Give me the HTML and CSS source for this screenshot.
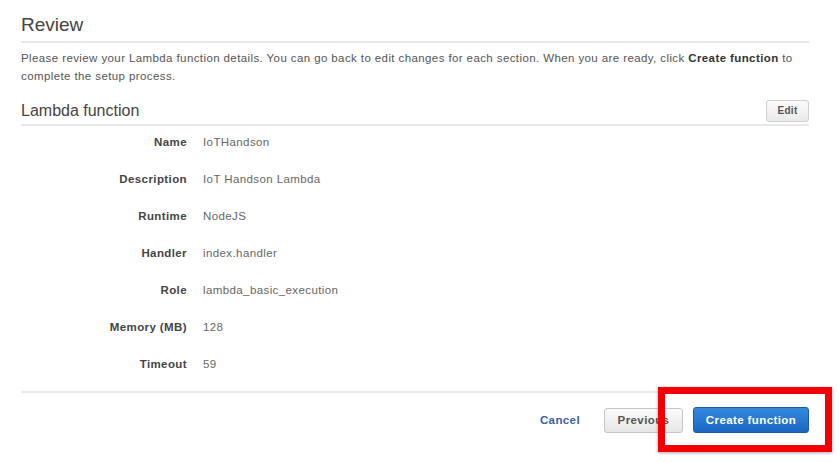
FILE: index.html
```html
<!DOCTYPE html>
<html>
<head>
<meta charset="utf-8">
<link rel="stylesheet" href="styles.css">
</head>
<body>
<div class="page">
  <h1 class="title">Review</h1>
  <p class="intro">Please review your Lambda function details. You can go back to edit changes for each section. When you are ready, click <b>Create function</b> to complete the setup process.</p>
  <div class="section-head">
    <h2 class="section-title">Lambda function</h2>
    <button class="btn-edit">Edit</button>
  </div>
  <dl class="details">
    <dt>Name</dt><dd>IoTHandson</dd>
    <dt>Description</dt><dd>IoT Handson Lambda</dd>
    <dt>Runtime</dt><dd>NodeJS</dd>
    <dt>Handler</dt><dd>index.handler</dd>
    <dt>Role</dt><dd>lambda_basic_execution</dd>
    <dt>Memory (MB)</dt><dd>128</dd>
    <dt>Timeout</dt><dd>59</dd>
  </dl>
  <div class="footer">
    <a class="cancel">Cancel</a>
    <button class="btn-prev">Previous</button>
    <button class="btn-create">Create function</button>
    <div class="highlight"></div>
  </div>
</div>
</body>
</html>
```
FILE: styles.css
```css
html, body {
  margin: 0;
  padding: 0;
  background: #ffffff;
}
body {
  font-family: "Liberation Sans", Arial, sans-serif;
  color: #555;
  min-height: 462px;
}
.page {
  padding: 0 31px 29px 21px;
}
.title {
  margin: 0;
  padding: 14px 0 5px;
  font-size: 19px;
  line-height: 22px;
  font-weight: normal;
  color: #444;
  border-bottom: 2px solid #e8e8e8;
}
.intro {
  margin: 6px 0 0;
  font-size: 11.5px;
  letter-spacing: 0.4px;
  line-height: 18px;
  color: #555;
}
.intro b {
  color: #333;
}
.section-head {
  margin-top: 12px;
  height: 27px;
  display: flex;
  align-items: center;
  justify-content: space-between;
  border-bottom: 2px solid #e8e8e8;
}
.section-title {
  margin: 0;
  font-size: 16px;
  font-weight: normal;
  color: #444;
}
.btn-edit {
  width: 43px;
  height: 22px;
  padding: 0;
  font-family: inherit;
  font-size: 10px;
  letter-spacing: 0.3px;
  font-weight: bold;
  color: #555;
  background: linear-gradient(#fbfbfb, #e9e9e9);
  border: 1px solid #cfcfcf;
  border-radius: 3px;
}
.details {
  margin: 0;
  padding: 7px 0 18px;
  display: grid;
  grid-template-columns: 166px 1fr;
  column-gap: 16px;
  row-gap: 19px;
  font-size: 11.5px;
  letter-spacing: 0.4px;
  line-height: 18px;
  border-bottom: 2px solid #ebebeb;
}
.details dt {
  text-align: right;
  font-weight: bold;
  color: #444;
}
.details dd {
  margin: 0;
  color: #666;
}
.footer {
  position: relative;
  margin-top: 14px;
  display: flex;
  justify-content: flex-end;
  align-items: center;
  height: 26px;
}
.cancel {
  font-size: 11.5px;
  letter-spacing: 0.4px;
  font-weight: bold;
  color: #3b5ea8;
  margin-right: 24px;
}
.btn-prev {
  width: 79px;
  height: 25px;
  padding: 0;
  margin-right: 10px;
  font-family: inherit;
  font-size: 11.5px;
  letter-spacing: 0.4px;
  font-weight: bold;
  color: #555;
  background: linear-gradient(#fbfbfb, #e6e6e6);
  border: 1px solid #c6c6c6;
  border-radius: 3px;
}
.btn-create {
  width: 116px;
  height: 26px;
  padding: 0;
  font-family: inherit;
  font-size: 11.5px;
  letter-spacing: 0.4px;
  font-weight: bold;
  color: #fff;
  background: linear-gradient(#338ade, #1a66c2);
  border: 1px solid #1b5aa6;
  border-radius: 3px;
}
.highlight {
  position: absolute;
  top: -20px;
  right: -23px;
  width: 174px;
  height: 65px;
  box-sizing: border-box;
  border: 7px solid #f50000;
  box-shadow: 0 1px 3px rgba(0, 0, 0, 0.35);
}
```
